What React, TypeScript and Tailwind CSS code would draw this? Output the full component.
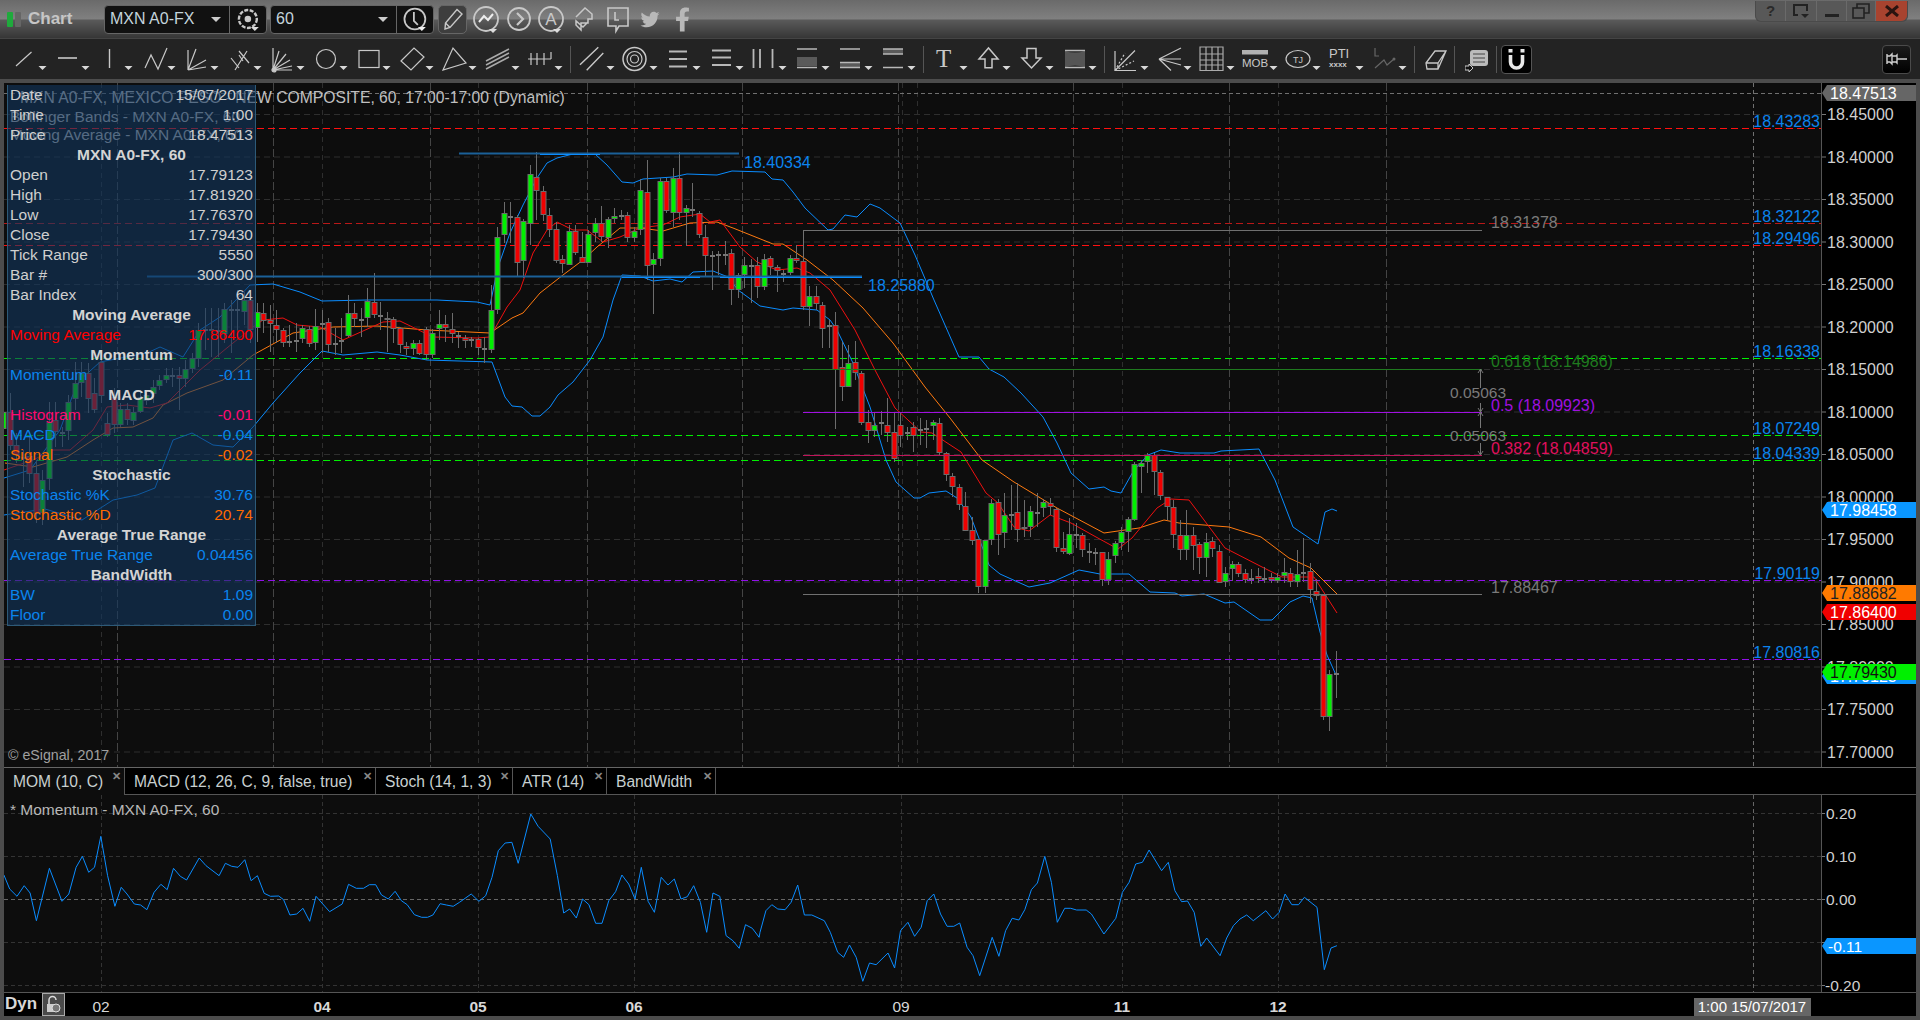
import React from 'react'
import { FaTwitter, FaFacebookF } from 'react-icons/fa'

type Candle = [number, number, number, number, 'g' | 'r' | 'd']

// high, body top, body bottom, low in chart pixels, first bar sits at x = 4
const candles: Candle[] = [
  [392, 412, 428, 440, 'g'], [393, 412, 445, 450, 'r'], [433, 445, 454, 463, 'r'], [450, 457, 457, 487, 'd'],
  [437, 456, 473, 483, 'r'], [460, 473, 513, 523, 'r'], [470, 480, 512, 525, 'g'], [402, 422, 478, 490, 'g'],
  [402, 420, 431, 447, 'r'], [427, 432, 432, 447, 'd'], [395, 402, 430, 440, 'g'], [362, 383, 398, 410, 'g'],
  [362, 373, 382, 397, 'g'], [363, 373, 398, 413, 'r'], [378, 393, 409, 413, 'r'], [353, 362, 395, 403, 'r'],
  [413, 423, 434, 437, 'r'], [388, 397, 424, 433, 'r'], [403, 409, 424, 427, 'g'], [403, 409, 419, 425, 'r'],
  [407, 412, 420, 425, 'g'], [390, 397, 411, 413, 'g'], [390, 395, 400, 405, 'g'], [380, 387, 393, 403, 'g'],
  [375, 380, 385, 390, 'g'], [368, 375, 379, 383, 'g'], [368, 375, 375, 387, 'd'], [367, 375, 378, 410, 'r'],
  [360, 369, 378, 387, 'g'], [353, 358, 368, 373, 'g'], [323, 330, 358, 367, 'g'], [308, 329, 329, 350, 'd'],
  [308, 329, 329, 357, 'd'], [308, 330, 330, 357, 'd'], [303, 309, 333, 343, 'g'], [300, 309, 309, 353, 'd'],
  [290, 309, 309, 340, 'd'], [292, 300, 311, 325, 'g'], [290, 300, 329, 343, 'r'], [303, 312, 327, 342, 'g'],
  [303, 313, 320, 333, 'r'], [305, 320, 323, 352, 'r'], [310, 325, 329, 343, 'r'], [328, 330, 342, 347, 'r'],
  [325, 341, 341, 347, 'd'], [323, 340, 340, 352, 'd'], [325, 328, 338, 343, 'g'], [326, 329, 343, 347, 'r'],
  [309, 326, 342, 350, 'g'], [310, 323, 323, 353, 'd'], [318, 322, 344, 352, 'r'], [328, 343, 343, 355, 'd'],
  [318, 340, 340, 353, 'd'], [295, 313, 335, 337, 'g'], [303, 313, 318, 327, 'r'], [308, 319, 319, 337, 'd'],
  [288, 301, 317, 327, 'g'], [273, 302, 314, 318, 'r'], [302, 315, 315, 330, 'd'], [312, 318, 319, 352, 'r'],
  [317, 319, 328, 343, 'r'], [327, 328, 344, 353, 'r'], [342, 346, 348, 355, 'r'], [340, 343, 348, 355, 'g'],
  [340, 343, 353, 355, 'r'], [327, 329, 354, 360, 'r'], [329, 333, 354, 358, 'g'], [310, 324, 328, 340, 'g'],
  [315, 324, 327, 342, 'r'], [313, 329, 333, 343, 'r'], [332, 335, 335, 348, 'd'], [335, 338, 340, 348, 'r'],
  [337, 339, 339, 347, 'd'], [338, 339, 347, 355, 'r'], [337, 348, 348, 363, 'd'], [285, 310, 349, 353, 'g'],
  [227, 237, 309, 314, 'g'], [202, 213, 234, 243, 'g'], [202, 216, 216, 243, 'd'], [215, 217, 262, 277, 'r'],
  [219, 221, 260, 278, 'g'], [165, 174, 223, 245, 'g'], [152, 177, 190, 220, 'r'], [186, 191, 214, 221, 'r'],
  [208, 215, 229, 237, 'r'], [222, 229, 260, 263, 'r'], [255, 259, 263, 273, 'r'], [225, 231, 264, 265, 'g'],
  [225, 231, 252, 255, 'r'], [232, 257, 262, 263, 'r'], [230, 234, 262, 263, 'g'], [218, 223, 232, 242, 'g'],
  [206, 223, 236, 242, 'r'], [217, 219, 237, 248, 'g'], [208, 216, 218, 223, 'g'], [210, 215, 215, 220, 'd'],
  [212, 215, 237, 242, 'r'], [227, 231, 237, 242, 'g'], [179, 190, 229, 235, 'g'], [160, 192, 265, 280, 'r'],
  [253, 259, 264, 314, 'g'], [178, 181, 258, 266, 'g'], [178, 181, 210, 213, 'r'], [168, 178, 212, 227, 'g'],
  [152, 178, 212, 220, 'r'], [205, 208, 212, 246, 'g'], [183, 209, 209, 217, 'd'], [211, 213, 234, 238, 'r'],
  [225, 237, 255, 277, 'r'], [251, 255, 255, 290, 'd'], [251, 254, 254, 275, 'd'], [241, 254, 254, 265, 'd'],
  [249, 253, 289, 305, 'r'], [273, 275, 289, 298, 'g'], [257, 265, 274, 288, 'g'], [259, 265, 265, 303, 'd'],
  [257, 265, 286, 298, 'r'], [254, 259, 286, 290, 'g'], [256, 258, 266, 275, 'r'], [265, 267, 270, 292, 'r'],
  [270, 273, 273, 282, 'd'], [255, 258, 272, 275, 'g'], [245, 258, 260, 263, 'r'], [258, 261, 306, 310, 'r'],
  [286, 296, 306, 326, 'g'], [286, 296, 303, 310, 'r'], [302, 305, 328, 348, 'r'], [320, 325, 325, 348, 'd'],
  [312, 325, 369, 429, 'r'], [342, 367, 386, 401, 'r'], [345, 363, 386, 387, 'g'], [341, 362, 372, 380, 'r'],
  [371, 373, 422, 425, 'r'], [410, 422, 430, 443, 'r'], [412, 425, 430, 437, 'g'], [411, 422, 422, 435, 'd'],
  [398, 425, 432, 442, 'r'], [413, 432, 458, 462, 'r'], [413, 425, 435, 447, 'r'], [427, 432, 432, 440, 'd'],
  [422, 427, 435, 452, 'r'], [418, 429, 429, 445, 'd'], [420, 428, 428, 448, 'd'], [420, 422, 425, 440, 'g'],
  [418, 423, 452, 455, 'r'], [452, 453, 474, 481, 'r'], [473, 476, 486, 497, 'r'], [484, 487, 504, 510, 'r'],
  [492, 506, 530, 530, 'r'], [517, 530, 540, 545, 'r'], [539, 539, 586, 593, 'r'], [540, 540, 586, 593, 'g'],
  [499, 503, 539, 545, 'g'], [499, 502, 534, 555, 'r'], [493, 515, 532, 548, 'g'], [485, 514, 514, 530, 'd'],
  [483, 512, 529, 542, 'r'], [500, 527, 528, 537, 'g'], [506, 511, 526, 537, 'g'], [493, 512, 512, 527, 'd'],
  [499, 502, 507, 517, 'g'], [498, 503, 506, 515, 'r'], [508, 509, 547, 552, 'r'], [532, 548, 551, 554, 'r'],
  [518, 534, 553, 555, 'g'], [523, 534, 534, 548, 'd'], [533, 535, 549, 557, 'r'], [543, 551, 551, 563, 'd'],
  [548, 552, 552, 565, 'd'], [552, 552, 579, 586, 'r'], [552, 559, 579, 585, 'g'], [541, 543, 555, 563, 'g'],
  [527, 532, 542, 550, 'g'], [517, 519, 531, 552, 'g'], [462, 464, 519, 521, 'g'], [460, 463, 466, 493, 'g'],
  [453, 455, 461, 473, 'g'], [453, 455, 471, 495, 'r'], [470, 472, 495, 500, 'r'], [497, 497, 506, 520, 'r'],
  [500, 507, 534, 548, 'r'], [520, 535, 549, 560, 'r'], [510, 535, 549, 560, 'g'], [527, 535, 545, 570, 'r'],
  [542, 544, 557, 574, 'r'], [533, 542, 557, 577, 'g'], [537, 541, 548, 557, 'r'], [545, 551, 582, 583, 'r'],
  [567, 573, 581, 587, 'g'], [561, 564, 568, 581, 'g'], [562, 564, 573, 577, 'r'], [569, 573, 579, 583, 'r'],
  [569, 578, 578, 584, 'd'], [568, 576, 578, 583, 'r'], [567, 578, 578, 583, 'd'], [573, 577, 579, 583, 'r'],
  [573, 577, 580, 583, 'g'], [558, 572, 575, 583, 'g'], [568, 573, 581, 587, 'r'], [550, 574, 581, 587, 'g'],
  [538, 572, 572, 582, 'd'], [563, 571, 589, 603, 'r'], [579, 591, 595, 600, 'r'], [595, 595, 716, 720, 'r'],
  [670, 674, 716, 731, 'g'], [651, 673, 673, 698, 'd'],
]

const upperBand = '4,478 30,470 60,430 72,397 80,380 100,362 147,353 160,347 183,357 200,330 220,317 250,285 273,284 300,292 322,301 367,300 437,300 477,302 490,305 498,267 510,233 523,205 537,178 547,163 557,158 573,154 595,154 607,165 622,182 633,183 643,179 673,177 687,174 717,175 732,171 765,172 772,179 783,180 793,192 805,208 828,230 833,229 845,215 857,217 870,204 880,208 900,223 915,255 934,300 959,357 979,357 989,369 1004,377 1021,393 1043,417 1057,443 1071,473 1089,489 1104,487 1111,491 1121,493 1134,470 1148,455 1161,450 1180,453 1214,453 1221,451 1259,449 1275,480 1293,527 1318,544 1325,512 1332,509 1337,511'
const lowerBand = '4,515 45,509 82,520 113,500 137,495 155,488 173,440 192,433 213,445 233,447 253,427 273,403 300,373 322,351 343,355 377,352 400,355 427,360 492,362 505,397 512,406 522,407 532,416 540,416 550,407 558,395 573,382 590,360 603,337 613,300 622,275 640,276 653,281 670,279 682,282 693,272 713,271 728,277 738,290 760,306 783,310 793,308 817,310 830,320 837,330 853,363 870,407 886,460 896,482 914,498 920,498 929,493 946,491 957,498 971,517 989,565 1000,574 1029,587 1050,583 1079,570 1100,574 1129,574 1150,592 1175,593 1182,596 1204,594 1225,603 1234,602 1260,620 1272,620 1290,602 1303,596 1312,598 1320,632 1327,655 1336,675'
const redMa = '4,470 33,460 53,450 70,450 93,430 107,407 127,405 150,408 167,403 200,370 233,343 253,327 263,320 283,318 297,325 320,327 343,340 383,322 400,321 433,337 477,338 490,337 493,332 507,307 520,290 533,253 547,230 557,222 573,230 587,230 603,242 620,237 640,228 663,225 680,217 700,214 710,222 720,220 740,247 757,262 777,270 797,268 810,273 830,290 855,330 875,370 895,408 921,432 932,433 961,452 986,493 998,503 1014,527 1029,531 1050,515 1071,523 1096,537 1118,549 1132,538 1157,508 1171,499 1189,500 1225,548 1264,568 1282,577 1314,577 1337,613'
const orangeMa = '5,463 33,467 67,457 93,440 113,428 133,427 153,418 163,405 187,393 223,380 253,355 293,333 333,327 377,326 427,330 490,333 512,318 523,313 540,293 563,275 583,260 597,247 620,228 640,228 663,231 690,223 717,222 733,228 773,244 783,244 807,260 833,280 863,308 893,343 925,387 950,418 982,460 1014,482 1057,508 1104,533 1139,528 1164,520 1179,523 1229,527 1261,537 1289,558 1311,568 1337,594'

const momLeft = [[8,408],[20,450],[35,472],[50,440],[62,462],[75,545],[102,388],[128,487],[142,465],[157,385],[170,352],[183,400],[195,385],[208,292],[222,410],[237,502],[250,445],[262,465],[277,495],[290,498],[303,512],[318,460],[332,436],[345,452],[358,388],[372,412],[385,423],[411,357],[425,380],[452,410],[465,373],[478,382],[491,385],[505,362],[518,425],[531,410],[545,463],[558,472],[575,471],[585,482],[598,528],[612,525],[625,508],[639,547],[652,472],[680,518],[706,495],[719,436],[735,448],[750,448],[762,437],[775,437],[787,468],[801,480],[815,457],[828,485],[840,497],[855,527],[870,535],[882,535],[893,528],[908,494],[921,498],[935,502],[948,490],[972,465],[988,487],[1002,470],[1015,415],[1028,335],[1042,312],[1056,310],[1069,373],[1095,225],[1110,262],[1135,300],[1150,410],[1163,522],[1175,510],[1189,537],[1202,480],[1215,497],[1229,553],[1242,553],[1256,485],[1270,458],[1283,408],[1297,435],[1310,480],[1323,385],[1337,487],[1350,520],[1364,415],[1378,438],[1391,420],[1405,480],[1418,473],[1431,440],[1445,490],[1458,580],[1471,462],[1485,472],[1498,590],[1512,605],[1525,628],[1538,557],[1552,568],[1566,595]]
const momRight = [[0,520],[8,455],[16,437],[24,450],[34,452],[42,430],[51,378],[60,468],[70,468],[87,485],[95,520],[105,580],[113,595],[121,558],[130,595],[139,667],[148,612],[157,617],[173,582],[182,627],[190,515],[200,490],[209,532],[218,505],[226,425],[235,405],[244,465],[253,502],[262,502],[270,492],[280,565],[288,590],[297,650],[314,535],[323,592],[332,515],[341,478],[350,483],[358,452],[367,392],[375,372],[385,292],[394,370],[402,490],[412,448],[420,448],[428,453],[441,453],[448,465],[465,525],[481,478],[490,400],[499,370],[508,315],[517,310],[526,273],[543,335],[552,310],[561,395],[570,428],[578,426],[587,460],[596,562],[604,537],[622,590],[631,537],[640,500],[649,480],[658,468],[667,485],[684,455],[693,480],[702,460],[710,405],[719,437],[728,437],[736,415],[753,445],[763,632],[772,567],[780,560]]
const momentumPoints = [
  ...momLeft.map(([x, y]) => `${(x / 2.063).toFixed(1)},${(740 + y / 3).toFixed(1)}`),
  ...momRight.map(([x, y]) => `${(760 + x / 1.352).toFixed(1)},${(760 + y / 3).toFixed(1)}`),
].join(' ')

const thinVerticals = [101, 322, 478, 634, 902, 917, 1122, 1278]
const heavyVerticals = [117, 273, 430, 587, 742, 898, 1073, 1229, 1386]
const priceTicks = ['18.45000', '18.40000', '18.35000', '18.30000', '18.25000', '18.20000', '18.15000', '18.10000', '18.05000', '18.00000', '17.95000', '17.90000', '17.85000', '17.80000', '17.75000', '17.70000']
const priceY = (i: number) => 114 + i * 42.5

const levels = [
  { y: 128.5, color: '#ff1010', label: '18.43283' },
  { y: 223.5, color: '#b81818', label: '18.32122' },
  { y: 245.5, color: '#ff1010', label: '18.29496' },
  { y: 358.5, color: '#00f000', label: '18.16338' },
  { y: 435.5, color: '#00f000', label: '18.07249' },
  { y: 460.5, color: '#00f000', label: '18.04339' },
  { y: 580.5, color: '#9010e8', label: '17.90119' },
  { y: 659.5, color: '#9010e8', label: '17.80816' },
]

const panelRows: { kind: 'head' | 'row'; left: string; right?: string; color?: string }[] = [
  { kind: 'row', left: 'Date', right: '15/07/2017' },
  { kind: 'row', left: 'Time', right: '1:00' },
  { kind: 'row', left: 'Price', right: '18.47513' },
  { kind: 'head', left: 'MXN A0-FX, 60' },
  { kind: 'row', left: 'Open', right: '17.79123' },
  { kind: 'row', left: 'High', right: '17.81920' },
  { kind: 'row', left: 'Low', right: '17.76370' },
  { kind: 'row', left: 'Close', right: '17.79430' },
  { kind: 'row', left: 'Tick Range', right: '5550' },
  { kind: 'row', left: 'Bar #', right: '300/300' },
  { kind: 'row', left: 'Bar Index', right: '64' },
  { kind: 'head', left: 'Moving Average' },
  { kind: 'row', left: 'Moving Average', right: '17.86400', color: 'text-[#ff0000]' },
  { kind: 'head', left: 'Momentum' },
  { kind: 'row', left: 'Momentum', right: '-0.11', color: 'text-[#0a84ee]' },
  { kind: 'head', left: 'MACD' },
  { kind: 'row', left: 'Histogram', right: '-0.01', color: 'text-[#ff0a6e]' },
  { kind: 'row', left: 'MACD', right: '-0.04', color: 'text-[#0a84ee]' },
  { kind: 'row', left: 'Signal', right: '-0.02', color: 'text-[#ff6a00]' },
  { kind: 'head', left: 'Stochastic' },
  { kind: 'row', left: 'Stochastic %K', right: '30.76', color: 'text-[#0a84ee]' },
  { kind: 'row', left: 'Stochastic %D', right: '20.74', color: 'text-[#ff6a00]' },
  { kind: 'head', left: 'Average True Range' },
  { kind: 'row', left: 'Average True Range', right: '0.04456', color: 'text-[#0a84ee]' },
  { kind: 'head', left: 'BandWidth' },
  { kind: 'row', left: 'BW', right: '1.09', color: 'text-[#0a84ee]' },
  { kind: 'row', left: 'Floor', right: '0.00', color: 'text-[#0a84ee]' },
]

const tabs = [
  { name: 'MOM (10, C)', w: 'w-[121px]', active: true },
  { name: 'MACD (12, 26, C, 9, false, true)', w: 'w-[251px]' },
  { name: 'Stoch (14, 1, 3)', w: 'w-[137px]' },
  { name: 'ATR (14)', w: 'w-[94px]' },
  { name: 'BandWidth', w: 'w-[109px]' },
]

function Tool({ children, arrow = true }: { children: React.ReactNode; arrow?: boolean }) {
  return (
    <svg width="36" height="40" viewBox="0 0 36 40" className="shrink-0 mr-[7px] overflow-visible" fill="none" stroke="#c8c8c8" strokeWidth="1.2">
      {children}
      {arrow && <polygon points="23.5,27 31.5,27 27.5,31" fill="#d8d8d8" stroke="none" />}
    </svg>
  )
}

function Sep() {
  return <div className="w-px h-[27px] bg-[#555] -ml-[4px] mr-[12px] shrink-0" />
}

function DrawingTools() {
  return (
    <div className="h-[40px] flex items-center pl-[15px] bg-[#232323] border-t border-[#444] box-content">
      <Tool><path d="M1 27L16.5 13" /></Tool>
      <Tool><path d="M0 19H19" strokeWidth="1.6" /></Tool>
      <Tool><path d="M8.5 10V29" strokeWidth="1.4" /></Tool>
      <Tool><path d="M1 29L7 16L14 30L23 9" /></Tool>
      <Tool><path d="M1 31L1 11M1 31L9 10M1 31L19 21M1 31L19 28" /></Tool>
      <Tool><path d="M1 19L9 29M5 31L17 12M9 12L19 24M13 22L9 16" /></Tool>
      <Tool><path d="M0 31V9M0 31L6 12M0 31L13 15M0 31L17 21M0 31L19 27M0 31H19" /><circle cx="1" cy="31" r="2" fill="#c8c8c8" /></Tool>
      <Tool><circle cx="10" cy="20" r="9.5" /></Tool>
      <Tool><rect x="0" y="11.5" width="20" height="17" /></Tool>
      <Tool><path d="M-1 22L12 9L22 18L9 31Z" /></Tool>
      <Tool><path d="M-2 31L8 9L21 24Z" /></Tool>
      <Tool><path d="M-2 22L21 10M-2 26L21 14M-2 30L21 18" stroke="#aaa" strokeWidth="1.5" /></Tool>
      <Tool><path d="M-3 20H20M0 14V26M6 14V26M13 14V26M20 13V20" /></Tool>
      <Sep />
      <Tool><path d="M-3 25.7L15.3 8.3M3.7 31.3L20.3 14" strokeWidth="1.4" /></Tool>
      <Tool><circle cx="8.5" cy="20" r="11.5" strokeWidth="1.5" /><circle cx="8.5" cy="20" r="7.5" /><circle cx="8.5" cy="20" r="4" /></Tool>
      <Tool><path d="M0 12.5H18M0 20H18M0 27.5H18" strokeWidth="1.8" stroke="#b8b8b8" /></Tool>
      <Tool><path d="M0 11.5H19M0 18.5H19M0 26H19" strokeWidth="1.8" stroke="#b8b8b8" /></Tool>
      <Tool><path d="M-1.5 10V29M5 10V29M17.5 10V29" strokeWidth="1.8" stroke="#b8b8b8" /></Tool>
      <Tool><rect x="-1" y="18" width="20" height="9" fill="#5a5a5a" stroke="none" /><path d="M-1 10H19M-1 28.5H19" strokeWidth="1.6" stroke="#b8b8b8" /></Tool>
      <Tool><rect x="-1" y="23" width="20" height="5" fill="#5a5a5a" stroke="none" /><path d="M-1 10H19M-1 23.5H19M-1 28.5H19" strokeWidth="1.6" stroke="#b8b8b8" /></Tool>
      <Tool><rect x="-1" y="10" width="20" height="5" fill="#5a5a5a" stroke="none" /><path d="M-1 10H19M-1 15H19M-1 28.5H19" strokeWidth="1.6" stroke="#b8b8b8" /></Tool>
      <Sep />
      <Tool><text x="0" y="28" fontFamily="'Liberation Serif', serif" fontSize="25" fill="#c8c8c8" stroke="none">T</text></Tool>
      <Tool><path d="M0 20L9.5 9L19 20H13V28.7H6V20Z" strokeWidth="1.5" /></Tool>
      <Tool><path d="M5 9.5H14V19H19L9.5 29L0 19H5Z" strokeWidth="1.5" /></Tool>
      <Tool><path d="M0 12Q10 15 20 12V28Q10 25 0 28Z" fill="#555" stroke="none" /><path d="M0 11.5H20M0 28.5H20" strokeWidth="1.6" stroke="#b8b8b8" /></Tool>
      <Sep />
      <Tool><path d="M-2 12V31.5H19M-2 31.5L18 11.5" /><path d="M-2 31.5L8 14M-2 31.5L17 22" strokeDasharray="2 2" /></Tool>
      <Tool><path d="M-1 20L21 9M-1 20H21M-1 20L21 26M-1 20L11 31.5" /></Tool>
      <Tool><path d="M-3 8H20V31.5H-3ZM-3 15H20M-3 21H20M-3 26H20M3 8V31.5M9 8V31.5M15 8V31.5" stroke="#aaa" /></Tool>
      <Tool>
        <rect x="-4" y="11" width="26" height="4.5" fill="#b0b0b0" stroke="none" />
        <text x="-4" y="28" fontFamily="'Liberation Sans', sans-serif" fontSize="11.5" fill="#c8c8c8" stroke="none">MOB</text>
      </Tool>
      <Tool>
        <ellipse cx="9" cy="20" rx="12" ry="8.5" />
        <text x="9" y="23.5" textAnchor="middle" fontFamily="'Liberation Sans', sans-serif" fontSize="9" fill="#c8c8c8" stroke="none">TJ</text>
      </Tool>
      <Tool>
        <text x="-3" y="19" fontFamily="'Liberation Sans', sans-serif" fontSize="13" fill="#c8c8c8" stroke="none">PTI</text>
        <text x="-3" y="28" fontFamily="'Liberation Sans', sans-serif" fontWeight="bold" fontSize="8" fill="#c8c8c8" stroke="none">xxxx</text>
      </Tool>
      <Tool>
        <path d="M0 9V17H4M0 29L9 21L12 26L19 20" stroke="#666" />
        <circle cx="19" cy="20" r="1.5" fill="#666" stroke="none" />
      </Tool>
      <Sep />
      <svg width="29" height="40" viewBox="0 0 29 40" className="shrink-0 -ml-[2px]" fill="none" stroke="#c8c8c8" strokeWidth="1.3">
        <path d="M1 24L10 12H21L13 30H2ZM1 24H13V30M13 24L21 12" />
      </svg>
      <div className="w-px h-[27px] bg-[#555] shrink-0" />
      <svg width="24" height="40" viewBox="0 0 24 40" className="shrink-0 ml-[10px] mr-[7px]">
        <rect x="5" y="11" width="18" height="16" rx="3" fill="#bbb" />
        <path d="M8 15H20M8 19H20M8 23H20" stroke="#444" />
        <path d="M0 27H4V25L8 29L4 33V31H0Z" fill="#111" stroke="#ccc" />
      </svg>
      <div className="w-px h-[27px] bg-[#555] shrink-0" />
      <div className="ml-[4px] w-[31px] h-[29px] bg-black rounded-[4px] border border-[#555] flex items-center justify-center">
        <svg width="21" height="25" viewBox="0 0 21 25" fill="none">
          <path d="M4.5 8V15A6 6 0 0 0 16.5 15V8" stroke="#e8e8e8" strokeWidth="3.6" />
          <rect x="2.5" y="2" width="4" height="3.5" fill="#e8e8e8" />
          <rect x="14.5" y="2" width="4" height="3.5" fill="#e8e8e8" />
        </svg>
      </div>
      <div className="ml-auto mr-[9px] w-[29px] h-[29px] bg-[linear-gradient(#1c1c1c,#000)] rounded-[4px] border border-[#4a4a4a] flex items-center justify-center">
        <svg width="22" height="14" viewBox="0 0 22 14" fill="none" stroke="#cfcfcf" strokeWidth="1.4">
          <path d="M1 2V12M1 4H4L6 2V12L4 10H1M6 4H10L11 3V11L10 10H6M11 7H21" />
        </svg>
      </div>
    </div>
  )
}

function TitleBar() {
  const iconStroke = '#c8c8c8'
  return (
    <div className="h-[38px] flex items-center bg-[linear-gradient(#6a6a6a_0,#808080_19px,#5a5a5a_20px,#363636_38px)] relative">
      <div className="w-[104px] flex items-center pl-[7px] gap-[2px] shrink-0">
        <div className="w-[6px] h-[15px] bg-[#1faa3c] rounded-[1px]" />
        <div className="w-[6px] h-[15px] bg-[#666] rounded-[1px]" />
        <span className="ml-[5px] text-[17px] font-bold text-[#c6c6c6]">Chart</span>
      </div>

      <div className="h-[29px] w-[163px] bg-[#111] border border-[#666] rounded-[4px] flex items-center shrink-0">
        <span className="pl-[5px] w-[126px] text-[16px] text-[#c4d4dc] flex items-center justify-between pr-[8px] border-r border-[#666] h-full">
          MXN A0-FX
          <span className="w-0 h-0 border-x-[5px] border-x-transparent border-t-[5px] border-t-[#ccc]" />
        </span>
        <svg width="36" height="27" viewBox="0 0 36 27" fill="none" stroke={iconStroke} strokeWidth="1.6">
          <circle cx="18" cy="13" r="9" strokeDasharray="4 1.5" strokeWidth="2.4" />
          <circle cx="18" cy="13" r="2.5" fill="#ccc" />
          <polygon points="21,21 29,21 25,25" fill="#ddd" stroke="none" />
        </svg>
      </div>

      <div className="ml-[3px] h-[29px] w-[164px] bg-[#111] border border-[#666] rounded-[4px] flex items-center shrink-0">
        <span className="pl-[5px] w-[127px] text-[16px] text-[#c4d4dc] flex items-center justify-between pr-[8px] border-r border-[#666] h-full">
          60
          <span className="w-0 h-0 border-x-[5px] border-x-transparent border-t-[5px] border-t-[#ccc]" />
        </span>
        <svg width="36" height="27" viewBox="0 0 36 27" fill="none" stroke={iconStroke} strokeWidth="1.8">
          <circle cx="18" cy="13" r="10.5" />
          <path d="M17 6V15L21 19" />
          <polygon points="21,21 29,21 25,25" fill="#eee" stroke="none" />
        </svg>
      </div>

      <div className="ml-[4px] w-[29px] h-[29px] bg-[#3e3e3e] border border-[#666] rounded-[5px] flex items-center justify-center shrink-0">
        <svg width="22" height="24" viewBox="0 0 22 24" fill="none" stroke={iconStroke} strokeWidth="1.4">
          <path d="M3 22L3.5 16L15 2.5L20 7L8 20.5ZM3.5 16L8 20.5" />
        </svg>
      </div>

      <svg width="250" height="38" viewBox="467 0 250 38" className="shrink-0" fill="none" stroke={iconStroke} strokeWidth="1.8">
        <circle cx="486" cy="19" r="12" />
        <path d="M479 22L484 16L488 20L493 14" stroke="#eee" strokeWidth="2" />
        <polygon points="489,29 497,29 493,33" fill="#ddd" stroke="none" />
        <circle cx="519" cy="19" r="11" />
        <path d="M517 13L523 19L517 25" strokeWidth="2.2" />
        <circle cx="551" cy="19" r="12" />
        <text x="551" y="25" textAnchor="middle" fontSize="17" fontFamily="'Liberation Sans', sans-serif" fill="#c8c8c8" stroke="none">A</text>
        <polygon points="553,29 561,29 557,33" fill="#ddd" stroke="none" />
        <path d="M576 17L585 8L592 14V19H588V23H581V30L576 25V21L583 27L588 22" strokeWidth="1.5" />
        <path d="M608 8H628V26H619L616 31V26H608ZM615 12V20H619" strokeWidth="1.6" />
      </svg>
      <FaTwitter className="absolute left-[639px] top-[10px] text-[#b8b8b8] w-[22px] h-[19px]" />
      <FaFacebookF className="absolute left-[675px] top-[7px] text-[#b8b8b8] w-[15px] h-[25px]" />

      <div className="ml-auto mr-[12px] self-start mt-[1px] h-[21px] flex bg-[#585858] rounded-b-[6px] border border-t-0 border-[#4a4a4a] shrink-0">
        <div className="w-[30px] flex items-center justify-center border-r border-[#6a6a6a] text-[#2a2a2a] font-bold text-[15px]">?</div>
        <div className="w-[31px] flex items-center justify-center border-r border-[#6a6a6a]">
          <svg width="18" height="16" viewBox="0 0 18 16" fill="none" stroke="#222" strokeWidth="2">
            <path d="M6 12H2V2H15V8" /><polygon points="9,11 17,11 13,15" fill="#222" stroke="none" />
          </svg>
        </div>
        <div className="w-[30px] flex items-end justify-center pb-[4px] border-r border-[#6a6a6a]">
          <div className="w-[14px] h-[3px] bg-[#222]" />
        </div>
        <div className="w-[29px] flex items-center justify-center border-r border-[#6a6a6a]">
          <svg width="18" height="16" viewBox="0 0 18 16" fill="none" stroke="#222" strokeWidth="1.6">
            <rect x="1" y="5" width="11" height="10" /><path d="M5 5V1H17V10H12" />
          </svg>
        </div>
        <div className="w-[31px] flex items-center justify-center bg-[#a8432f] rounded-br-[6px]">
          <svg width="14" height="12" viewBox="0 0 14 12" stroke="#2a1410" strokeWidth="3"><path d="M1 1L13 11M13 1L1 11" /></svg>
        </div>
      </div>
    </div>
  )
}

function DataPanel() {
  return (
    <div className="absolute left-[3px] top-[2px] w-[249px] bg-[#12375f]/60 border border-[#2d5a78] border-t-0">
      {panelRows.map((row, i) =>
        row.kind === 'head' ? (
          <div key={i} className="h-[20px] leading-[20px] text-center font-bold text-[15.5px] text-[#d4d4d4]">{row.left}</div>
        ) : (
          <div key={i} className={`h-[20px] leading-[20px] flex justify-between pl-[2px] pr-[2px] text-[15.5px] ${row.color ?? 'text-[#cfcfcf]'}`}>
            <span>{row.left}</span>
            <span>{row.right}</span>
          </div>
        )
      )}
    </div>
  )
}

function PricePlot() {
  return (
    <svg width="1817" height="684" viewBox="4 83 1817 684" className="block shrink-0" fill="none" fontFamily="'Liberation Sans', sans-serif" fontSize="15.5">
      {priceTicks.map((_, i) => (
        <path key={i} d={`M4 ${priceY(i) + 0.5}H1821`} stroke="#2e2e2e" strokeDasharray="6 4" />
      ))}
      {thinVerticals.map((x) => <path key={x} d={`M${x + 0.5} 83V767`} stroke="#2e2e2e" strokeDasharray="5 4" />)}
      {heavyVerticals.map((x) => <path key={x} d={`M${x + 0.5} 83V767`} stroke="#444" strokeDasharray="8 3" />)}
      <path d="M1753.5 83V767M4 93.5H1821" stroke="#707070" strokeDasharray="4 3" />

      {levels.map((l) => (
        <g key={l.label}>
          <path d={`M4 ${l.y}H1821`} stroke={l.color} strokeDasharray="7 4" />
          <text x="1820" y={l.y - 1.5} textAnchor="end" fill="#0b84ee" stroke="none" fontSize="16">{l.label}</text>
        </g>
      ))}

      <polyline points={upperBand} stroke="#0a8cff" />
      <polyline points={lowerBand} stroke="#0a8cff" />
      <polyline points={orangeMa} stroke="#ff7a10" />
      <polyline points={redMa} stroke="#f01010" />

      {candles.map(([hi, top, bot, lo, kind], i) => {
        const cx = Math.floor(491.33 + 6.5 * (i - 75)) + 0.5
        return (
          <g key={i}>
            <path d={`M${cx} ${hi}V${lo}`} stroke="#6c6c6c" />
            {kind === 'd' ? (
              <rect x={cx - 2.5} y={top} width="5" height="2" fill="#777" />
            ) : (
              <rect x={cx - 2.5} y={top + 0.5} width="5" height={bot - top} fill={kind === 'g' ? '#00f000' : '#f00000'} stroke="#6c6c6c" />
            )}
          </g>
        )
      })}

      <path d="M459 153.5H739M147 276.5H862" stroke="#1b6098" strokeWidth="2" />
      <path d="M540 154.5H600M622 277.5H700M720 277.5H862" stroke="#0a8cff" />
      <text x="744" y="168" fill="#0b84ee" stroke="none" fontSize="16">18.40334</text>
      <text x="868" y="291" fill="#0b84ee" stroke="none" fontSize="16">18.25880</text>

      <path d="M803.5 230V258M803 230.5H1482" stroke="#707070" />
      <path d="M803 369.5H1482" stroke="#1f7a1f" />
      <path d="M803 412.5H1482" stroke="#a010e0" />
      <path d="M803 455.5H1482" stroke="#c0145a" />
      <path d="M803 594.5H1482" stroke="#707070" />
      <path d="M1480.5 369V388M1480.5 403V428M1480.5 443V455M1478 373L1480.5 369L1483 373M1478 408L1480.5 412L1483 408M1478 416L1480.5 412L1483 416M1478 451L1480.5 455L1483 451" stroke="#777" />
      <text x="1491" y="228" fill="#7a7a7a" stroke="none" fontSize="16">18.31378</text>
      <text x="1491" y="367" fill="#1f7a1f" stroke="none" fontSize="16">0.618 (18.14986)</text>
      <text x="1491" y="411" fill="#a010e0" stroke="none" fontSize="16">0.5 (18.09923)</text>
      <text x="1491" y="454" fill="#e0105e" stroke="none" fontSize="16">0.382 (18.04859)</text>
      <text x="1491" y="593" fill="#7a7a7a" stroke="none" fontSize="16">17.88467</text>
      <text x="1450" y="398" fill="#7a7a7a" stroke="none">0.05063</text>
      <text x="1450" y="441" fill="#7a7a7a" stroke="none">0.05063</text>

      <text x="20" y="103" fill="#c0c0c0" stroke="none" fontSize="15.7">MXN A0-FX, MEXICO PESO - NEW COMPOSITE, 60, 17:00-17:00 (Dynamic)</text>
      <text x="10" y="122" fill="#b8b8b8" stroke="none">Bollinger Bands - MXN A0-FX, 60</text>
      <text x="10" y="140" fill="#b8b8b8" stroke="none">Moving Average - MXN A0-FX, 60</text>
      <text x="8" y="760" fill="#a0a0a0" stroke="none" fontSize="14.2">© eSignal, 2017</text>
    </svg>
  )
}

function AxisTag({ y, fill, text, color }: { y: number; fill: string; text: string; color: string }) {
  return (
    <g>
      <polygon points={`0,${y} 5,${y - 8} 94,${y - 8} 94,${y + 8} 5,${y + 8}`} fill={fill} />
      <text x="8" y={y + 6} fill={color} fontSize="16">{text}</text>
    </g>
  )
}

function PriceAxis() {
  return (
    <svg width="95" height="684" viewBox="0 83 94 684" className="block shrink-0 bg-black border-l border-[#555]" fontFamily="'Liberation Sans', sans-serif" fontSize="16">
      {priceTicks.map((t, i) => (
        <g key={t}>
          <path d={`M0 ${priceY(i) + 0.5}H4`} stroke="#777" />
          <text x="5" y={priceY(i) + 6} fill="#d0d0d0">{t}</text>
        </g>
      ))}
      <AxisTag y={93} fill="#666" text="18.47513" color="#fff" />
      <AxisTag y={510} fill="#0a96ff" text="17.98458" color="#fff" />
      <AxisTag y={593} fill="#ff7a00" text="17.88682" color="#222" />
      <AxisTag y={612} fill="#f00000" text="17.86400" color="#fff" />
      <AxisTag y={676} fill="#0a96ff" text="17.79123" color="#fff" />
      <AxisTag y={672} fill="#00f000" text="17.79430" color="#111" />
    </svg>
  )
}

function MomentumPlot() {
  const gridY = [814, 857, 900, 943, 986]
  return (
    <div className="flex h-[197px] shrink-0">
      <svg width="1817" height="197" viewBox="4 796 1817 197" className="block shrink-0" fill="none" fontFamily="'Liberation Sans', sans-serif">
        {gridY.map((y) => <path key={y} d={`M4 ${y + 0.5}H1821`} stroke={y === 900 ? '#666' : '#333'} strokeDasharray="4 3" />)}
        {[101, 322, 478, 634, 901, 1122, 1278].map((x) => <path key={x} d={`M${x + 0.5} 796V993`} stroke="#333" strokeDasharray="4 3" />)}
        <path d="M1753.5 796V993" stroke="#666" strokeDasharray="4 3" />
        <polyline points={momentumPoints} stroke="#0a8cff" />
        <text x="10" y="816" fill="#b8b8b8" stroke="none" fontSize="15.5">* Momentum - MXN A0-FX, 60</text>
      </svg>
      <svg width="95" height="197" viewBox="0 796 94 197" className="block shrink-0 bg-black border-l border-[#555]" fontFamily="'Liberation Sans', sans-serif" fontSize="15.5">
        {[['0.20', 814], ['0.10', 857], ['0.00', 900], ['-0.10', 943], ['-0.20', 986]].map(([t, y]) => (
          <g key={t}>
            <path d={`M0 ${Number(y) + 0.5}H3`} stroke="#777" />
            <text x={String(t).startsWith('-') ? 3 : 4} y={Number(y) + 6} fill="#d0d0d0">{t}</text>
          </g>
        ))}
        <polygon points="0,947 5,939 94,939 94,955 5,955" fill="#0a96ff" />
        <text x="6" y="953" fill="#fff">-0.11</text>
      </svg>
    </div>
  )
}

function TimeAxis() {
  const labels: [string, number, boolean][] = [['02', 101, false], ['04', 322, true], ['05', 478, true], ['06', 634, true], ['09', 901, false], ['11', 1122, true], ['12', 1278, true]]
  return (
    <div className="flex h-[23px] bg-black border-t border-[#555] box-content shrink-0">
      <span className="w-[38px] pl-[1px] text-[17px] font-bold text-[#d8d8d8] leading-[22px] shrink-0">Dyn</span>
      <div className="w-[23px] h-[23px] bg-[#4a4a4a] border border-[#aaa] flex items-center justify-center shrink-0">
        <svg width="15" height="19" viewBox="0 0 15 19" fill="none">
          <path d="M3 9V5A3.5 3.5 0 0 1 10 5" stroke="#ddd" strokeWidth="1.5" />
          <rect x="1" y="9" width="8" height="8" fill="#ccc" />
          <circle cx="10" cy="13" r="4" fill="#777" stroke="#ddd" />
        </svg>
      </div>
      <svg width="1755" height="23" viewBox="65 0 1755 23" className="block shrink-0" fontFamily="'Liberation Sans', sans-serif" fontSize="15.5">
        {labels.map(([t, x, bold]) => (
          <text key={t} x={x} y="19" textAnchor="middle" fill="#d8d8d8" fontWeight={bold ? 'bold' : 'normal'}>{t}</text>
        ))}
        <rect x="1694" y="5" width="117" height="18" fill="#666" />
        <text x="1752" y="19" textAnchor="middle" fill="#fff" fontSize="15">1:00 15/07/2017</text>
      </svg>
    </div>
  )
}

export default function App() {
  return (
    <div className="w-[1920px] h-[1020px] overflow-hidden bg-[#4c4c4c] font-['Liberation_Sans',sans-serif] flex flex-col">
      <TitleBar />
      <DrawingTools />
      <div className="h-[4px] shrink-0" />
      <div className="pl-[4px] w-[1916px] flex-1 flex flex-col">
        <div className="h-[684px] flex relative bg-[#0d0d0d] shrink-0">
          <PricePlot />
          <PriceAxis />
          <DataPanel />
        </div>
        <div className="h-[1px] bg-[#666] shrink-0" />
        <div className="h-[27px] bg-black border-b border-[#555] flex text-[15.6px] text-[#c8d0d0] shrink-0 w-[1912px]">
          {tabs.map((t) => (
            <div key={t.name} className={`${t.w} relative pl-[9px] leading-[28px] border-r border-[#555] ${t.active ? 'bg-[#0d0d0d] h-[27px]' : ''}`}>
              {t.name}
              <span className="absolute right-[3px] top-[2px] text-[11px] leading-[12px] font-bold text-[#888]">✕</span>
            </div>
          ))}
        </div>
        <div className="bg-[#0d0d0d]">
          <MomentumPlot />
        </div>
        <TimeAxis />
      </div>
    </div>
  )
}
